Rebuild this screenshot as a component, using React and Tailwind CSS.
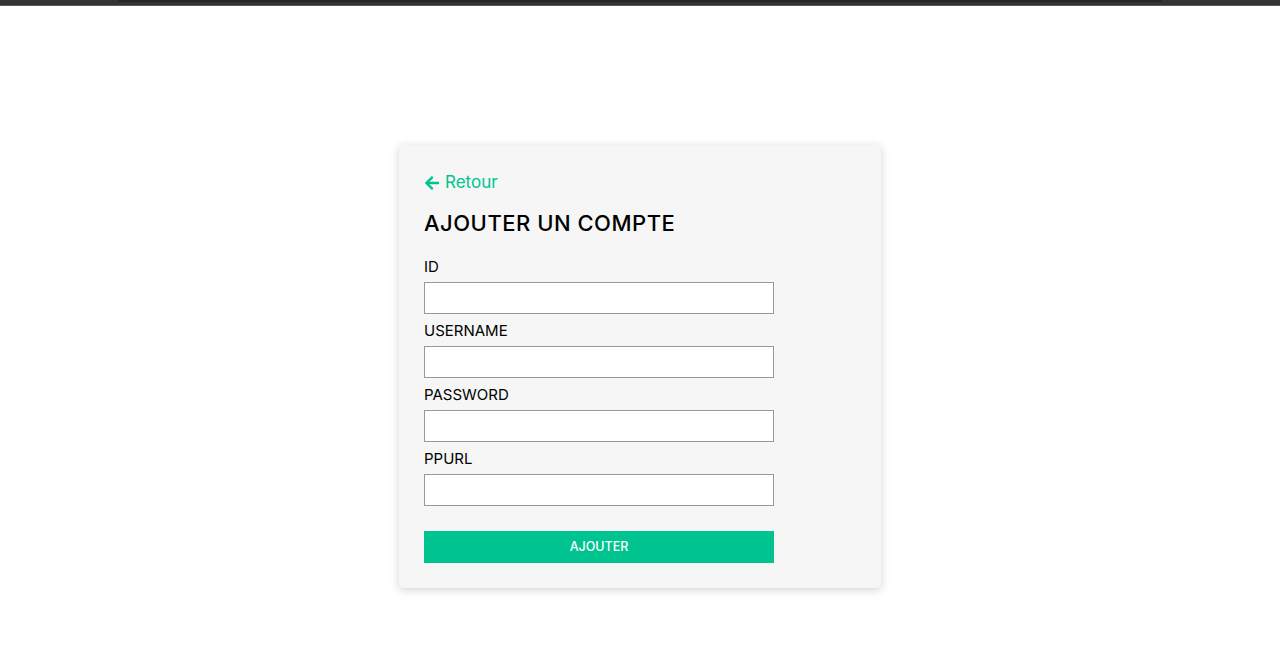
import { FaArrowLeft } from 'react-icons/fa';

const FIELDS = ['ID', 'USERNAME', 'PASSWORD', 'PPURL'];

export default function App() {
  return (
    <div className="min-h-[656px] bg-white font-['Inter',sans-serif] text-black">
      {/* top bar */}
      <div className="h-[6px] bg-[#333333] border-b border-[#5a5a55]">
        <div className="mx-[118px] h-[2px] bg-[#262626]" />
      </div>

      <div className="flex justify-center pt-[139px]">
        <div className="w-[482px] rounded bg-[#f5f6f5] px-[25px] pt-[25px] pb-[25px] shadow-[0_2px_10px_rgba(0,0,0,0.18)]">
          <a href="#" className="mt-[1px] flex h-[24px] items-center gap-[5px] text-[17px] text-[#00c48f]">
            <FaArrowLeft className="h-4 w-4" />
            <span>Retour</span>
          </a>

          <h1 className="mt-[12px] text-[22px] font-medium leading-[32px] tracking-[0.5px]">AJOUTER UN COMPTE</h1>

          <form className="mt-[11px] w-[350px]" onSubmit={e => e.preventDefault()}>
            {FIELDS.map(name => (
              <div key={name}>
                <label className="block pt-[2px] text-[15px] leading-[30px]">{name}</label>
                <input
                  type={name === 'PASSWORD' ? 'password' : 'text'}
                  className="block h-[32px] w-full border border-[#999999] bg-white px-2 outline-none"
                />
              </div>
            ))}
            <button
              type="submit"
              className="mt-[25px] flex h-[32px] w-full items-center justify-center bg-[#00c48f] text-[12.5px] font-medium text-white"
            >
              AJOUTER
            </button>
          </form>
        </div>
      </div>
    </div>
  );
}
